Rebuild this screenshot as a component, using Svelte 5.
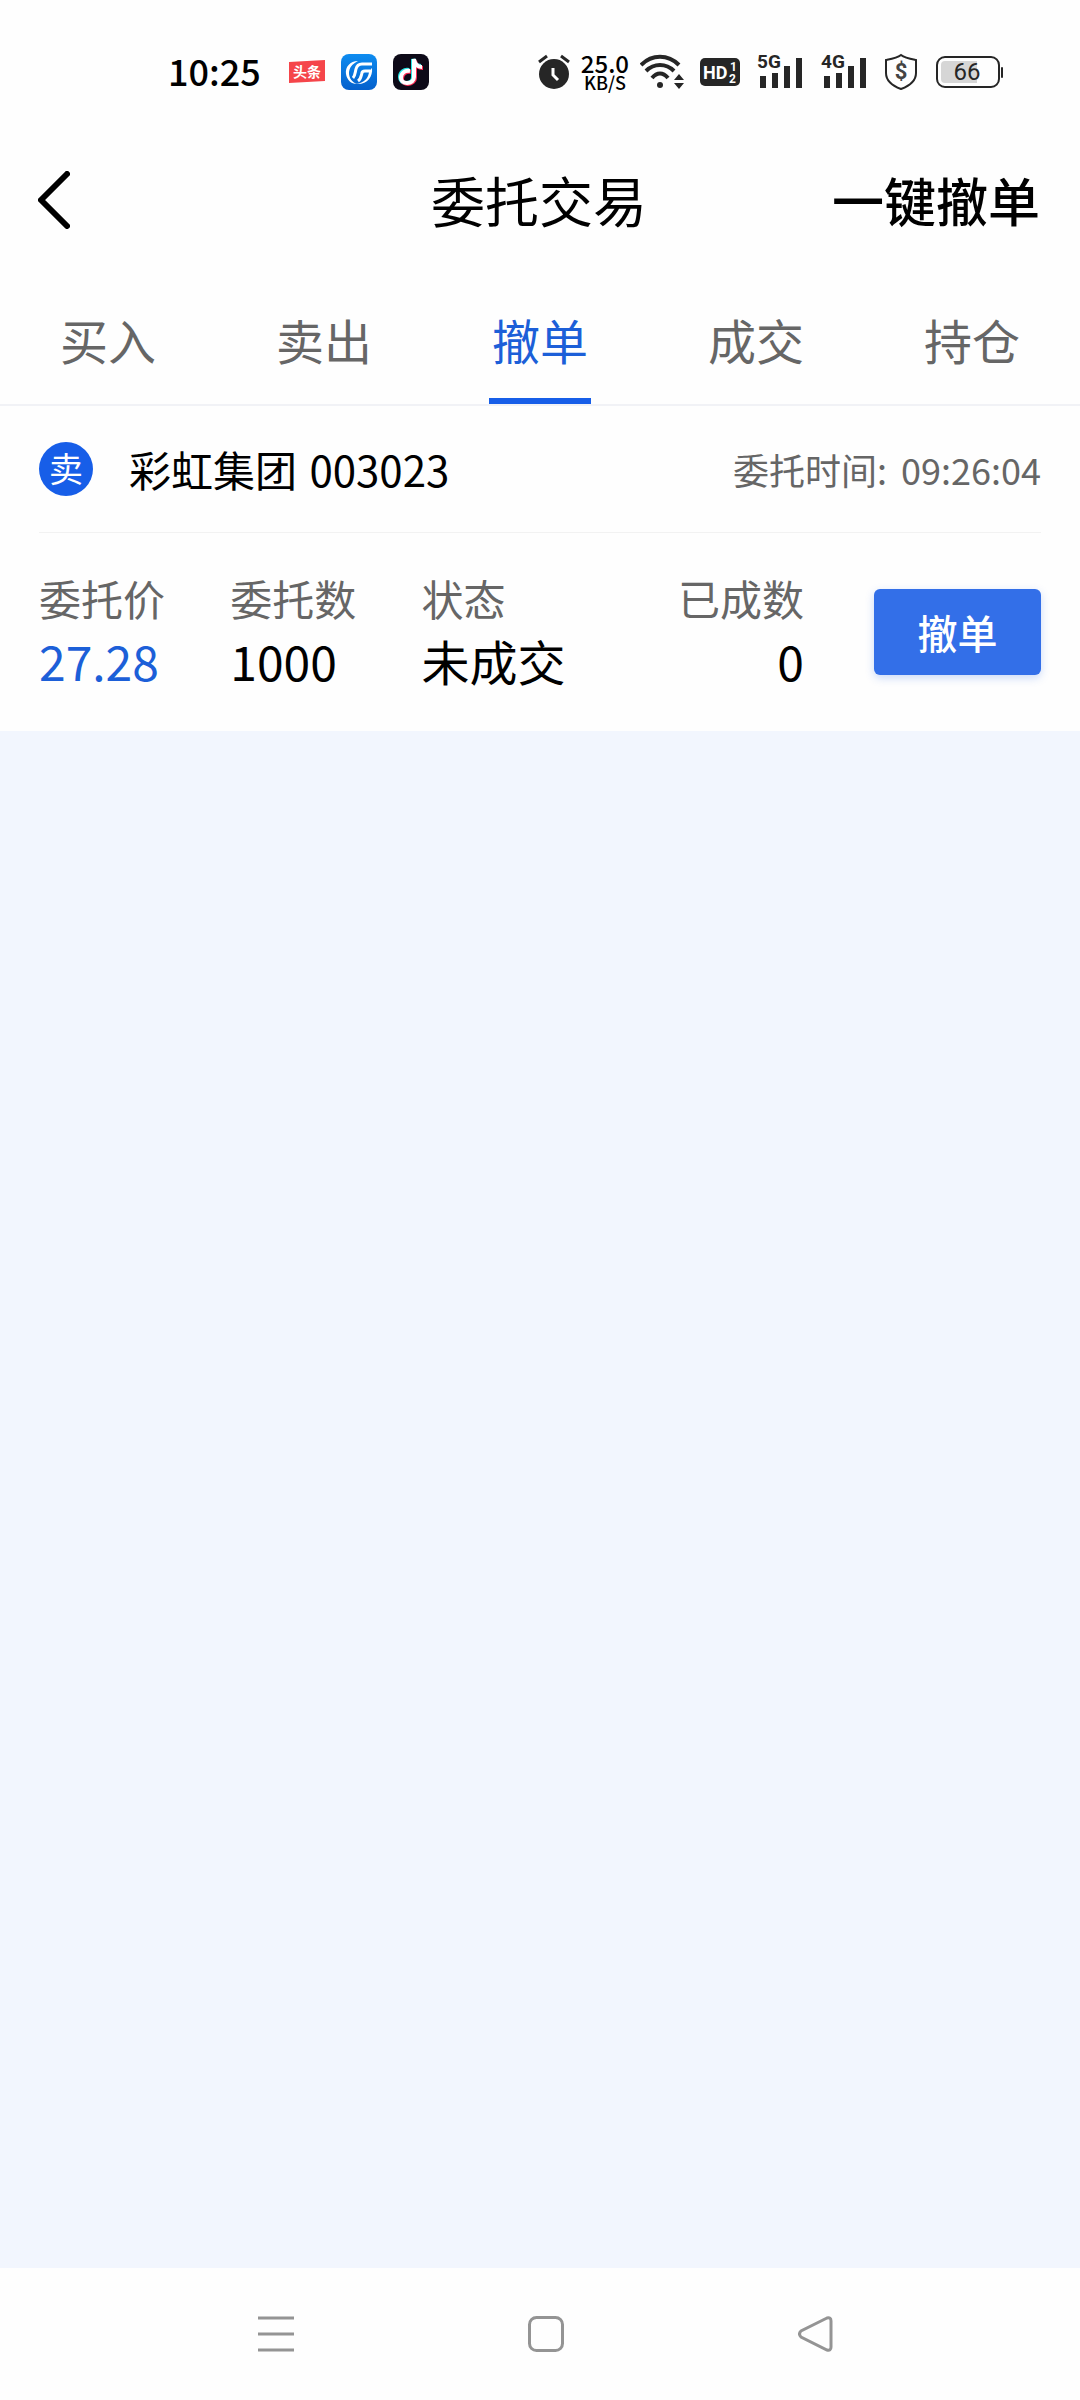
<script>
    const tabs = ['买入', '卖出', '撤单', '成交', '持仓'];
    let activeTab = $state(2);

    let orders = [
        {
            side: '卖',
            name: '彩虹集团',
            code: '003023',
            time: '09:26:04',
            price: '27.28',
            amount: '1000',
            status: '未成交',
            done: '0'
        }
    ];

    const signals = ['5G', '4G'];
</script>


<div class="page">
    <div class="status-bar">
        <div class="status-left">
            <span class="clock">10:25</span>
            <svg width="36" height="36" viewBox="0 0 36 36" aria-hidden="true">
                <path d="M0 8 L36 6 L36 27 L0 29 Z" fill="#f5454a" />
                <text class="cjk" x="18" y="23" text-anchor="middle" font-size="14" font-weight="700" fill="#fff">头条</text>
            </svg>
            <svg width="36" height="36" viewBox="0 0 36 36" aria-hidden="true">
                <defs>
                    <linearGradient id="app-blue" x1="0" y1="0" x2="0" y2="1">
                        <stop offset="0" stop-color="#0d8cf0" />
                        <stop offset="1" stop-color="#0560cc" />
                    </linearGradient>
                </defs>
                <rect width="36" height="36" rx="8" fill="url(#app-blue)" />
                <path d="M17 7 C9 7 4 13 5 20 C6 26 10 30 16 30 C11 28 8 24 8 19 C8 14 11 10 17 7 Z" fill="#fff" />
                <path d="M31 14 C32 23 26 31 15 30 C23 29 28 24 28 17 Z" fill="#fff" />
                <g fill="none" stroke="#fff" stroke-width="3">
                    <path d="M12 24 C14 22 14 19 15 15 C16 11 18 10 21 10 H31" />
                    <path d="M17 27 C20 25 20 22 21 19 C21 18 22 17 24 17 H29" />
                </g>
            </svg>
            <svg width="36" height="36" viewBox="0 0 36 36" aria-hidden="true">
                <rect width="36" height="36" rx="8" fill="#0d0a18" />
                <g fill="none" stroke-width="4">
                    <path d="M16 16 C11 15 7 18 7 23 C7 27 10 29 13 29 C17 29 20 27 20 23 V5 C21 10 24 12 28 12" stroke="#27e5e5" />
                    <path d="M18 18 C13 17 9 20 9 25 C9 28 12 30 15 30 C19 30 22 27 22 24 V7 C23 12 26 14 30 14" stroke="#fb2c55" />
                    <path d="M17 17 C12 16 8 19 8 24 C8 27 11 29 14 29 C18 29 21 27 21 23 V5 C22 11 25 13 29 13" stroke="#fff" />
                </g>
            </svg>
        </div>

        <div class="status-right">
            <svg width="32" height="36" viewBox="0 0 32 36" aria-hidden="true">
                <circle cx="16" cy="20" r="15" fill="#262626" />
                <path d="M1 8 L9 2 M23 2 L31 8" stroke="#262626" stroke-width="3" />
                <path d="M15 14 V21 L20 26" fill="none" stroke="#fff" stroke-width="3" />
            </svg>
            <div class="speed">
                <span class="rate">25.0</span>
                <span class="unit">KB/S</span>
            </div>
            <svg width="44" height="36" viewBox="0 0 44 36" aria-hidden="true">
                <g fill="none" stroke="#262626" stroke-width="4">
                    <path d="M1 11 C12 0 28 0 39 11" />
                    <path d="M6 17 C14 9 26 9 34 17" />
                    <path d="M12 24 C17 18 23 18 28 24" />
                </g>
                <circle cx="20" cy="31" r="3" fill="#262626" />
                <path d="M34 26 L39 20 L44 26 Z M34 29 L39 35 L44 29 Z" fill="#262626" />
            </svg>
            <svg width="40" height="28" viewBox="0 0 40 28" aria-hidden="true">
                <rect width="40" height="28" rx="5" fill="#262626" />
                <g class="digits" fill="#fff" font-weight="700">
                    <text x="3" y="21" font-size="18">HD</text>
                    <text x="30" y="13" font-size="12">1</text>
                    <text x="29" y="25" font-size="12">2</text>
                </g>
            </svg>
            {#each signals as signal}
                <svg width="48" height="44" viewBox="0 -4 48 44" aria-hidden="true">
                    <text class="digits" x="1" y="14" font-size="19" font-weight="700" fill="#262626">{signal}</text>
                    <path d="M4 22h6v12h-6z M16 19h6v15h-6z M28 12h6v22h-6z M40 4h6v30h-6z" fill="#262626" />
                </svg>
            {/each}
            <svg class="shield" width="34" height="38" viewBox="0 0 34 38" aria-hidden="true">
                <path d="M17 2 C21 5 27 6 32 7 V20 C32 28 25 33 17 36 C9 33 2 28 2 20 V7 C7 6 13 5 17 2 Z" fill="none" stroke="#262626" stroke-width="2" />
                <text class="digits" x="17" y="26" text-anchor="middle" font-size="22" font-weight="700" fill="#444">$</text>
            </svg>
            <svg width="68" height="36" viewBox="0 -2 68 36" aria-hidden="true">
                <rect x="1" y="1" width="62" height="30" rx="8" fill="none" stroke="#262626" stroke-width="2" />
                <path d="M9 5 H41 V27 H9 Q5 27 5 23 V9 Q5 5 9 5 Z" fill="#d6d6d6" />
                <rect x="65" y="11" width="2" height="11" rx="1" fill="#262626" />
                <text class="digits" x="31" y="24" text-anchor="middle" font-size="24" fill="#262626">66</text>
            </svg>
        </div>
    </div>

    <header>
        <button class="back" aria-label="返回">
            <svg width="32" height="58" viewBox="0 0 32 58" aria-hidden="true">
                <path d="M29 3 L3 29 L29 55" fill="none" stroke="#000" stroke-width="6" stroke-linecap="round" stroke-linejoin="round" />
            </svg>
        </button>
        <h1>委托交易</h1>
        <button class="cancel-all">一键撤单</button>
    </header>

    <nav class="tabs">
        {#each tabs as tab, index}
            <button class:active={activeTab === index} onclick={() => activeTab = index}>{tab}</button>
        {/each}
    </nav>

    <main>
        {#each orders as order}
            <section class="order">
                <div class="order-head">
                    <span class="side">{order.side}</span>
                    <h2>{order.name} <span class="code">{order.code}</span></h2>
                    <span class="order-time">委托时间: <time>{order.time}</time></span>
                </div>
                <div class="order-body">
                    <dl>
                        <div>
                            <dt>委托价</dt>
                            <dd class="price">{order.price}</dd>
                        </div>
                        <div>
                            <dt>委托数</dt>
                            <dd>{order.amount}</dd>
                        </div>
                        <div>
                            <dt>状态</dt>
                            <dd>{order.status}</dd>
                        </div>
                        <div class="done">
                            <dt>已成数</dt>
                            <dd>{order.done}</dd>
                        </div>
                    </dl>
                    <button class="cancel">撤单</button>
                </div>
            </section>
        {/each}
    </main>

    <footer>
        <button aria-label="菜单">
            <svg width="36" height="36" viewBox="0 0 36 36" aria-hidden="true">
                <path d="M0 2 H36 M0 18 H36 M0 34 H36" stroke="#949494" stroke-width="3" />
            </svg>
        </button>
        <button aria-label="主页">
            <svg width="36" height="36" viewBox="0 0 36 36" aria-hidden="true">
                <rect x="1.5" y="1.5" width="33" height="33" rx="7" fill="none" stroke="#949494" stroke-width="3" />
            </svg>
        </button>
        <button aria-label="后退">
            <svg width="36" height="36" viewBox="0 0 36 36" aria-hidden="true">
                <path d="M29 2 L3 15 Q0 18 3 21 L29 34 Q33 35 33 31 V5 Q33 1 29 2 Z" fill="none" stroke="#949494" stroke-width="3" />
            </svg>
        </button>
    </footer>
</div>


<style>
    :global(body) {
        background: #f2f6fe;
    }
    .page {
        display: flex;
        flex-direction: column;
        min-height: 100vh;
        font-family: "Noto Sans CJK SC", sans-serif;
        color: #000;
    }
    button {
        padding: 0;
        border: none;
        background: none;
        font-family: inherit;
        color: inherit;
        cursor: pointer;
    }
    svg {
        display: block;
        flex: none;
    }
    .cjk {
        font-family: "Noto Sans CJK SC", sans-serif;
    }
    .digits {
        font-family: "Roboto", sans-serif;
    }

    .status-bar {
        display: flex;
        justify-content: space-between;
        align-items: center;
        height: 144px;
        padding: 0 76px 0 168px;
        background: #fefefe;
    }
    .status-left,
    .status-right {
        display: flex;
        align-items: center;
        gap: 16px;
    }
    .clock {
        margin-right: 12px;
        padding-bottom: 4px;
        font-size: 36px;
        line-height: 36px;
        font-weight: 500;
    }
    .speed {
        display: flex;
        flex-direction: column;
        align-items: center;
        margin: 0 -5px;
        font-weight: 500;
    }
    .rate {
        font-size: 24px;
        line-height: 20px;
    }
    .unit {
        font-size: 18px;
        line-height: 18px;
    }
    .shield {
        margin-right: 2px;
    }

    header {
        display: grid;
        grid-template-columns: 1fr auto 1fr;
        align-items: center;
        height: 112px;
        padding: 0 40px 4px 38px;
        background: #fefefe;
    }
    h1 {
        margin: 0;
        font-size: 54px;
        font-weight: 400;
        line-height: 64px;
    }
    .back {
        justify-self: start;
    }
    .cancel-all {
        justify-self: end;
        font-size: 52px;
        font-weight: 500;
        line-height: 64px;
    }

    .tabs {
        display: flex;
        height: 144px;
        border-bottom: 2px solid #f1f2f6;
        background: #fefefe;
    }
    .tabs button {
        position: relative;
        flex: 1;
        padding-top: 14px;
        font-size: 48px;
        color: #666;
    }
    .tabs button.active {
        color: #1c5fd8;
    }
    .tabs button.active::after {
        content: "";
        position: absolute;
        left: 50%;
        bottom: 0;
        width: 102px;
        height: 6px;
        margin-left: -51px;
        background: #175ee8;
    }

    main {
        flex: 1;
    }
    .order {
        padding: 0 39px;
        background: #fefefe;
    }
    .order-head {
        display: flex;
        align-items: center;
        height: 126px;
        border-bottom: 1px solid #f2f2f2;
    }
    .side {
        width: 54px;
        height: 54px;
        border-radius: 50%;
        background: #175ee8;
        font-size: 34px;
        line-height: 52px;
        text-align: center;
        color: #fff;
    }
    h2 {
        flex: 1;
        margin: 0 0 0 36px;
        font-size: 42px;
        font-weight: 400;
        line-height: 54px;
    }
    .code {
        margin-left: 3px;
    }
    .order-time {
        font-size: 36px;
        color: #666;
    }
    time {
        margin-left: 6px;
    }
    .order-body {
        display: flex;
        align-items: center;
        gap: 70px;
        height: 198px;
    }
    dl {
        display: flex;
        flex: 1;
        margin: 0;
        padding-bottom: 6px;
    }
    dl div {
        flex: 1;
    }
    dt {
        font-size: 42px;
        line-height: 62px;
        color: #666;
    }
    dd {
        margin: 0;
        font-size: 48px;
        line-height: 62px;
    }
    .price {
        color: #1c5fd8;
    }
    .done {
        text-align: right;
    }
    .cancel {
        width: 167px;
        height: 86px;
        border-radius: 6px;
        background: #336fe8;
        box-shadow: 0 3px 8px rgba(51, 111, 232, 0.25);
        font-size: 40px;
        font-weight: 500;
        color: #fff;
    }

    footer {
        display: flex;
        justify-content: center;
        align-items: center;
        gap: 234px;
        height: 132px;
        padding-left: 12px;
        background: #fefefe;
    }
</style>
